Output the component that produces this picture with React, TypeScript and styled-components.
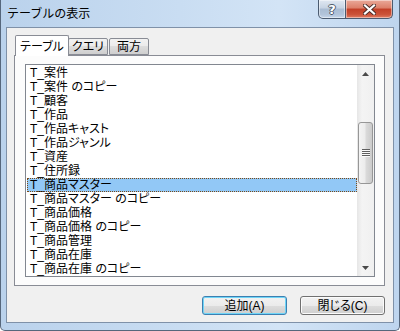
import styled, { createGlobalStyle } from "styled-components";

const GlobalStyle = createGlobalStyle`
  html, body {
    margin: 0;
    padding: 0;
    background: #ffffff;
    overflow: hidden;
  }
  body {
    font-family: "Liberation Sans", "Noto Sans CJK JP", sans-serif;
    font-size: 12px;
    color: #000;
  }
`;

const tables = [
  "T_案件",
  "T_案件 のコピー",
  "T_顧客",
  "T_作品",
  "T_作品キャスト",
  "T_作品ジャンル",
  "T_資産",
  "T_住所録",
  "T_商品マスター",
  "T_商品マスター のコピー",
  "T_商品価格",
  "T_商品価格 のコピー",
  "T_商品管理",
  "T_商品在庫",
  "T_商品在庫 のコピー",
];

const SELECTED = 8;

const StyledFrame = styled.div`
  width: 400px;
  height: 331px;
  box-sizing: border-box;
  display: flex;
  flex-direction: column;
  border: 1px solid #56677c;
  border-top: none;
  border-radius: 0 0 5px 5px;
  background: linear-gradient(
    90deg,
    #bad2ec 0%,
    #c9ddf2 45%,
    #d3e4f6 70%,
    #bed5ee 100%
  );
`;

const StyledTitleBar = styled.div`
  height: 27px;
  flex: 0 0 27px;
  display: flex;
  align-items: flex-start;
  padding: 0 6px 0 6px;
`;

const StyledTitle = styled.div`
  padding-top: 7px;
  line-height: 14px;
  font-size: 12px;
  color: #000;
  flex: 1;
`;

const StyledCaptionButton = styled.div<{ $kind: "help" | "close" }>`
  height: 19px;
  box-sizing: border-box;
  width: ${(p) => (p.$kind === "close" ? 47 : 28)}px;
  display: flex;
  align-items: center;
  justify-content: center;
  border: 1px solid #4b5b70;
  border-top: none;
  border-left: ${(p) => (p.$kind === "close" ? "none" : "1px solid #4b5b70")};
  border-radius: ${(p) => (p.$kind === "close" ? "0 0 5px 0" : "0 0 0 5px")};
  box-shadow: inset 0 0 0 1px rgba(255, 255, 255, 0.45);
  background: ${(p) =>
    p.$kind === "close"
      ? "linear-gradient(180deg, #eaa999 0%, #dc7f69 45%, #c23f27 50%, #cb5238 80%, #e07c62 100%)"
      : "linear-gradient(180deg, #e0e8f2 0%, #c6d3e3 45%, #a9bcd3 50%, #b2c4da 80%, #c6d6ea 100%)"};
`;

const StyledHelpGlyph = styled.span`
  font-family: "DejaVu Sans", sans-serif;
  font-weight: bold;
  font-size: 13px;
  line-height: 13px;
  color: #fff;
  text-shadow:
    1px 0 0 #4d5a6a,
    -1px 0 0 #4d5a6a,
    0 1px 0 #4d5a6a,
    0 -1px 0 #4d5a6a;
`;

const StyledClient = styled.div`
  flex: 1;
  margin: 0 5px 7px 5px;
  border: 1px solid #7f91a8;
  background: #f0f0f0;
  padding: 7px 8px 7px 7px;
  display: flex;
  flex-direction: column;
`;

const StyledTabStrip = styled.div`
  height: 20px;
  display: flex;
  align-items: flex-end;
  padding-left: 1px;
  position: relative;
  z-index: 1;
`;

const StyledTab = styled.div<{ $active?: boolean; $width: number }>`
  box-sizing: border-box;
  width: ${(p) => p.$width}px;
  height: ${(p) => (p.$active ? 21 : 17)}px;
  margin-bottom: ${(p) => (p.$active ? -1 : 0)}px;
  margin-right: ${(p) => (p.$active ? -1 : 1)}px;
  border: 1px solid #898c95;
  border-bottom: ${(p) => (p.$active ? "none" : "1px solid #898c95")};
  border-radius: 2px 2px 0 0;
  background: ${(p) =>
    p.$active
      ? "#ffffff"
      : "linear-gradient(180deg, #f2f2f2 0%, #ebebeb 50%, #dddddd 50%, #cfcfcf 100%)"};
  position: relative;
  z-index: ${(p) => (p.$active ? 2 : 1)};
  display: flex;
  align-items: center;
  justify-content: center;
  padding-top: ${(p) => (p.$active ? 1 : 0)}px;
  font-size: 12px;
  line-height: 14px;
  font-feature-settings: "palt";
`;

const StyledPanel = styled.div`
  height: 231px;
  box-sizing: border-box;
  border: 1px solid #898c95;
  background: #fcfcfc;
  padding: 8px 9px 8px 10px;
`;

const StyledListBox = styled.div`
  height: 213px;
  box-sizing: border-box;
  border: 1px solid #828790;
  background: #ffffff;
  display: flex;
`;

const StyledItems = styled.div`
  flex: 1;
  padding-top: 1px;
  overflow: hidden;
`;

const StyledItem = styled.div<{ $selected?: boolean }>`
  height: 14px;
  line-height: 14px;
  margin-left: 1px;
  padding-left: 3px;
  white-space: nowrap;
  font-size: 12px;
  font-feature-settings: "palt";
  background: ${(p) => (p.$selected ? "#92c8f6" : "transparent")};
  outline: ${(p) => (p.$selected ? "1px dotted #7a4a18" : "none")};
  outline-offset: -1px;
`;

const StyledScrollBar = styled.div`
  width: 17px;
  flex: 0 0 17px;
  display: flex;
  flex-direction: column;
  background: linear-gradient(90deg, #e6e6e6 0%, #f4f4f4 30%, #f0f0f0 100%);
`;

const StyledArrow = styled.div`
  height: 17px;
  display: flex;
  align-items: center;
  justify-content: center;
`;

const StyledTrack = styled.div`
  flex: 1;
  display: flex;
  flex-direction: column;
  padding-top: 40px;
`;

const StyledThumb = styled.div`
  height: 62px;
  margin: 0 1px;
  box-sizing: border-box;
  border: 1px solid #979797;
  border-radius: 3px;
  background: linear-gradient(
    90deg,
    #f4f4f4 0%,
    #ececec 45%,
    #dadada 55%,
    #cbcbcb 100%
  );
  display: flex;
  align-items: center;
  justify-content: center;
`;

const StyledButtons = styled.div`
  margin-top: 10px;
  display: flex;
  justify-content: flex-end;
  gap: 13px;
`;

const StyledButton = styled.button<{ $default?: boolean }>`
  width: 85px;
  height: 19px;
  padding: 0;
  box-sizing: border-box;
  border: 1px solid ${(p) => (p.$default ? "#3c7fb1" : "#707070")};
  border-radius: 3px;
  box-shadow: inset 0 0 0 1px ${(p) => (p.$default ? "#6fd5f7" : "#fbfbfb")};
  background: linear-gradient(
    180deg,
    #f2f2f2 0%,
    #ebebeb 50%,
    #dddddd 50%,
    #cfcfcf 100%
  );
  font-family: "Liberation Sans", "Noto Sans CJK JP", sans-serif;
  font-size: 12px;
  line-height: 16px;
  font-feature-settings: "palt";
  color: #000;
`;

function Triangle({ up }: { up?: boolean }) {
  return (
    <svg width="7" height="4" viewBox="0 0 7 4">
      <path d={up ? "M3.5 0 L7 4 L0 4 Z" : "M0 0 L7 0 L3.5 4 Z"} fill="#4a4a4a" />
    </svg>
  );
}

function Grip() {
  return (
    <svg width="8" height="8" viewBox="0 0 8 8">
      {[0, 2, 4, 6].map((y) => (
        <g key={y}>
          <rect x="0" y={y} width="8" height="1" fill="#5f5f5f" />
          <rect x="0" y={y + 1} width="8" height="1" fill="#ffffff" opacity="0.8" />
        </g>
      ))}
    </svg>
  );
}

function CloseGlyph() {
  return (
    <svg width="13" height="11" viewBox="0 0 13 11">
      <path d="M2 1.5 L11 9.5 M11 1.5 L2 9.5" stroke="#4a2c28" strokeWidth="4" strokeLinecap="square" />
      <path d="M2 1.5 L11 9.5 M11 1.5 L2 9.5" stroke="#ffffff" strokeWidth="2.2" strokeLinecap="square" />
    </svg>
  );
}

export default function App() {
  return (
    <>
      <GlobalStyle />
      <StyledFrame>
        <StyledTitleBar>
          <StyledTitle>テーブルの表示</StyledTitle>
          <StyledCaptionButton $kind="help">
            <StyledHelpGlyph>?</StyledHelpGlyph>
          </StyledCaptionButton>
          <StyledCaptionButton $kind="close">
            <CloseGlyph />
          </StyledCaptionButton>
        </StyledTitleBar>

        <StyledClient>
          <StyledTabStrip>
            <StyledTab $active $width={54}>
              テーブル
            </StyledTab>
            <StyledTab $width={40}>クエリ</StyledTab>
            <StyledTab $width={40}>両方</StyledTab>
          </StyledTabStrip>

          <StyledPanel>
            <StyledListBox>
              <StyledItems>
                {tables.map((name, i) => (
                  <StyledItem key={name} $selected={i === SELECTED}>
                    {name}
                  </StyledItem>
                ))}
              </StyledItems>
              <StyledScrollBar>
                <StyledArrow>
                  <Triangle up />
                </StyledArrow>
                <StyledTrack>
                  <StyledThumb>
                    <Grip />
                  </StyledThumb>
                </StyledTrack>
                <StyledArrow>
                  <Triangle />
                </StyledArrow>
              </StyledScrollBar>
            </StyledListBox>
          </StyledPanel>

          <StyledButtons>
            <StyledButton $default>追加(A)</StyledButton>
            <StyledButton>閉じる(C)</StyledButton>
          </StyledButtons>
        </StyledClient>
      </StyledFrame>
    </>
  );
}
